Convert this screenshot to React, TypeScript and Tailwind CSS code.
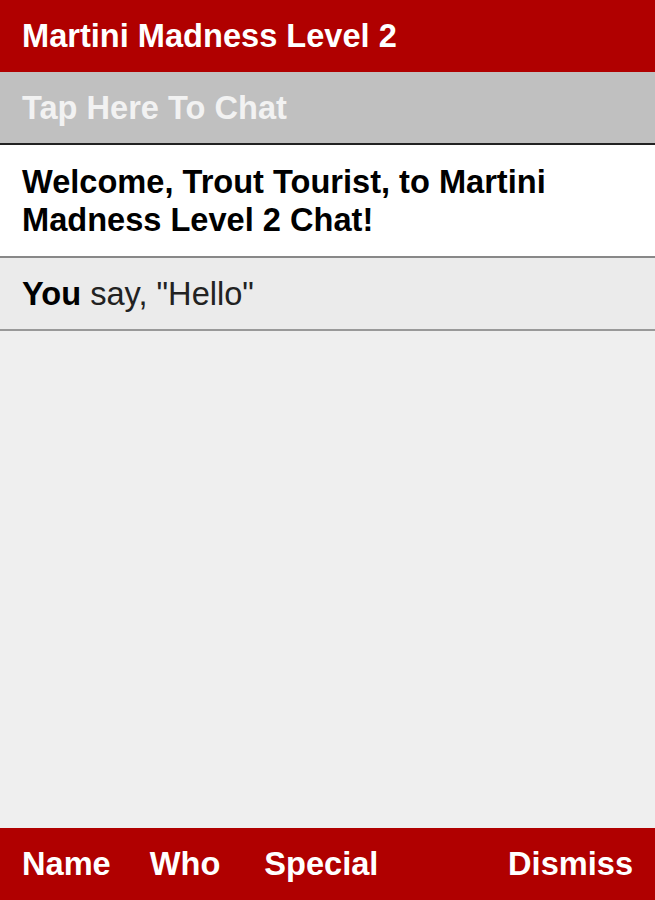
export default function App() {
  return (
    <div className="h-screen flex flex-col bg-[#efefef] font-['Liberation_Sans',Arial,sans-serif] text-[32.6px] leading-[38px]">
      {/* Title bar */}
      <div className="h-[72px] shrink-0 bg-[#b00000] flex items-center px-[22px]">
        <h1 className="font-bold text-white">Martini Madness Level 2</h1>
      </div>

      {/* Chat input prompt */}
      <div className="h-[73px] shrink-0 bg-[#c0c0c0] border-b-2 border-[#222] flex items-center px-[22px]">
        <span className="font-bold text-[#f2f2f2]">Tap Here To Chat</span>
      </div>

      {/* Messages */}
      <div className="bg-white border-b-2 border-[#888] pt-[18px] pb-[17px] px-[22px]">
        <p className="font-bold text-black">Welcome, Trout Tourist, to Martini Madness Level 2 Chat!</p>
      </div>
      <div className="h-[73px] shrink-0 bg-[#ebebeb] border-b-2 border-[#999] flex items-center px-[22px]">
        <p className="text-[#222]">
          <span className="font-bold text-black">You</span> say, "Hello"
        </p>
      </div>

      <div className="flex-1" />

      {/* Bottom actions */}
      <div className="h-[72px] shrink-0 bg-[#b00000] flex items-center px-[22px] font-bold text-white">
        <button>Name</button>
        <button className="ml-[39px]">Who</button>
        <button className="ml-[44px]">Special</button>
        <button className="ml-auto">Dismiss</button>
      </div>
    </div>
  )
}
